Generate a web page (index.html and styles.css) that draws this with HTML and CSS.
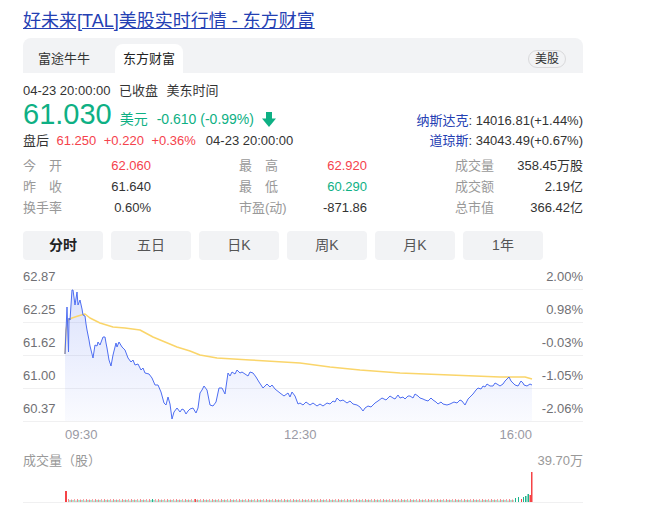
FILE: index.html
```html
<!DOCTYPE html>
<html lang="zh-CN">
<head>
<meta charset="utf-8">
<title>好未来[TAL]美股实时行情 - 东方财富</title>
<link rel="stylesheet" href="styles.css">
</head>
<body>
<div class="card">
  <h3 class="title"><a href="#">好未来[TAL]美股实时行情 - 东方财富</a></h3>

  <div class="source-bar">
    <div class="src-tabs">
      <span class="src-tab">富途牛牛</span>
      <span class="src-tab active">东方财富</span>
    </div>
    <span class="market">美股</span>
  </div>

  <div class="status"><span>04-23 20:00:00</span><span>已收盘</span><span>美东时间</span></div>

  <div class="quote">
    <div class="quote-main">
      <div class="price-row">
        <span class="price">61.030</span>
        <span class="unit">美元</span>
        <span class="change">-0.610 (-0.99%)</span>
        <svg class="arrow" width="14" height="15" viewBox="0 0 14 15"><rect x="4" y="0" width="6" height="8" fill="#0eb084"/><polygon points="0,6.5 14,6.5 7,15" fill="#0eb084"/></svg>
      </div>
      <div class="after-row">
        <span>盘后</span><span class="up">61.250</span><span class="up">+0.220</span><span class="up">+0.36%</span><span>04-23 20:00:00</span>
      </div>
    </div>
    <div class="indexes">
      <div><a href="#">纳斯达克</a>: 14016.81(+1.44%)</div>
      <div><a href="#">道琼斯</a>: 34043.49(+0.67%)</div>
    </div>
  </div>

  <div class="stats">
    <div class="stat"><span class="k">今开</span><span class="v up">62.060</span></div>
    <div class="stat"><span class="k">最高</span><span class="v up">62.920</span></div>
    <div class="stat"><span class="k">成交量</span><span class="v">358.45万股</span></div>
    <div class="stat"><span class="k">昨收</span><span class="v">61.640</span></div>
    <div class="stat"><span class="k">最低</span><span class="v down">60.290</span></div>
    <div class="stat"><span class="k">成交额</span><span class="v">2.19亿</span></div>
    <div class="stat"><span class="k">换手率</span><span class="v">0.60%</span></div>
    <div class="stat"><span class="k">市盈(动)</span><span class="v">-871.86</span></div>
    <div class="stat"><span class="k">总市值</span><span class="v">366.42亿</span></div>
  </div>

  <div class="periods">
    <span class="period active">分时</span>
    <span class="period">五日</span>
    <span class="period">日K</span>
    <span class="period">周K</span>
    <span class="period">月K</span>
    <span class="period">1年</span>
  </div>

  <svg class="chart" width="560" height="251" viewBox="0 0 560 251">
    <defs>
      <linearGradient id="area" gradientUnits="userSpaceOnUse" x1="0" y1="289" x2="0" y2="421">
        <stop offset="0" stop-color="#4e6ef2" stop-opacity="0.2"/>
        <stop offset="1" stop-color="#4e6ef2" stop-opacity="0.03"/>
      </linearGradient>
      <pattern id="vol" patternUnits="userSpaceOnUse" x="68" y="496" width="9" height="6">
        <rect x="0" y="3" width="1" height="3" fill="#f7898d"/>
        <rect x="1.5" y="4" width="1" height="2" fill="#5cc9a8"/>
        <rect x="3" y="3.5" width="1" height="2.5" fill="#f7898d"/>
        <rect x="4.5" y="4" width="1" height="2" fill="#5cc9a8"/>
        <rect x="6" y="3" width="1" height="3" fill="#f9a3a6"/>
        <rect x="7.5" y="4.5" width="1" height="1.5" fill="#5cc9a8"/>
      </pattern>
    </defs>
    <g transform="translate(-23,-260)">
      <g class="grid">
        <line x1="23" y1="289.5" x2="583" y2="289.5"/>
        <line x1="23" y1="322.5" x2="583" y2="322.5"/>
        <line x1="23" y1="355.5" x2="583" y2="355.5"/>
        <line x1="23" y1="388.5" x2="583" y2="388.5"/>
        <line x1="23" y1="421.5" x2="583" y2="421.5"/>
        <line x1="23" y1="502.5" x2="583" y2="502.5"/>
      </g>

      <path fill="url(#area)" d="M65,354 L67,307 68.5,352 69,318 70,320 72,290 73,290 75,305 77,292 78,305 80,300 82,309 83,315 85,316 86,324 87,330 89,340 90,346 91,350 93,358 95,345 97,346 98,342 100,345 103,337 105,337 106,343 107,348 109,360 111,366 113,355 116,343 117,347 119,342 122,347 125,350 128,358 131,362 133,360 135,365 138,364 141,370 143,368 145,373 149,374 152,378 155,385 158,385 161,392 164,403 166,405 168,397 170,404 172,419 174,412 177,408 180,412 182,409 184,410 186,414 188,411 190,409 193,408 196,413 198,408 200,393 202,390 204,386 207,390 210,405 213,406 216,402 219,388 222,388 225,394 228,373 230,376 232,372 235,374 237,370 240,373 242,372 245,374 248,376 250,372 253,373 256,377 259,382 263,388 267,384 270,387 272,385 275,389 280,393 284,396 288,393 290,397 292,392 295,396 298,404 300,403 303,405 306,402 310,405 313,403 317,406 320,404 323,406 327,403 330,404 333,401 335,402 337,398 340,401 343,400 347,403 350,401 353,404 357,405 360,407 363,411 365,408 368,406 371,407 375,403 378,401 382,398 386,400 390,396 393,398 395,399 398,395 400,398 403,397 405,399 408,396 410,396 413,398 415,394 418,396 420,398 423,399 425,400 428,401 431,398 433,400 436,402 438,404 441,402 443,404 447,405 450,404 454,402 457,403 460,400 462,401 465,405 468,399 470,397 473,394 476,390 478,388 481,389 483,386 485,387 487,384 490,386 493,386 495,383 497,384 500,386 503,384 505,381 507,379 509,377 511,381 513,383 515,385 518,386 521,381 523,383 524,385 527,386 530,384 532,385 L532,421 L65,421 Z"/>
      <path class="avg" d="M65,354 L66,330 68,320 72,318 78,316 85,314 90,318 100,323 113,327 125,328 140,330 153,337 165,342 177,347 190,351 200,355 217,358 250,360 300,363 330,367 360,370 400,373 450,375 500,377 525,377 532,379"/>
      <path class="price-line" d="M65,354 L67,307 68.5,352 69,318 70,320 72,290 73,290 75,305 77,292 78,305 80,300 82,309 83,315 85,316 86,324 87,330 89,340 90,346 91,350 93,358 95,345 97,346 98,342 100,345 103,337 105,337 106,343 107,348 109,360 111,366 113,355 116,343 117,347 119,342 122,347 125,350 128,358 131,362 133,360 135,365 138,364 141,370 143,368 145,373 149,374 152,378 155,385 158,385 161,392 164,403 166,405 168,397 170,404 172,419 174,412 177,408 180,412 182,409 184,410 186,414 188,411 190,409 193,408 196,413 198,408 200,393 202,390 204,386 207,390 210,405 213,406 216,402 219,388 222,388 225,394 228,373 230,376 232,372 235,374 237,370 240,373 242,372 245,374 248,376 250,372 253,373 256,377 259,382 263,388 267,384 270,387 272,385 275,389 280,393 284,396 288,393 290,397 292,392 295,396 298,404 300,403 303,405 306,402 310,405 313,403 317,406 320,404 323,406 327,403 330,404 333,401 335,402 337,398 340,401 343,400 347,403 350,401 353,404 357,405 360,407 363,411 365,408 368,406 371,407 375,403 378,401 382,398 386,400 390,396 393,398 395,399 398,395 400,398 403,397 405,399 408,396 410,396 413,398 415,394 418,396 420,398 423,399 425,400 428,401 431,398 433,400 436,402 438,404 441,402 443,404 447,405 450,404 454,402 457,403 460,400 462,401 465,405 468,399 470,397 473,394 476,390 478,388 481,389 483,386 485,387 487,384 490,386 493,386 495,383 497,384 500,386 503,384 505,381 507,379 509,377 511,381 513,383 515,385 518,386 521,381 523,383 524,385 527,386 530,384 532,385"/>

      <text class="ax" x="23" y="280.5">62.87</text>
      <text class="ax" x="23" y="313.5">62.25</text>
      <text class="ax" x="23" y="346.5">61.62</text>
      <text class="ax" x="23" y="379.5">61.00</text>
      <text class="ax" x="23" y="412.5">60.37</text>

      <text class="ax end" x="583" y="280.5">2.00%</text>
      <text class="ax end" x="583" y="313.5">0.98%</text>
      <text class="ax end" x="583" y="346.5">-0.03%</text>
      <text class="ax end" x="583" y="379.5">-1.05%</text>
      <text class="ax end" x="583" y="412.5">-2.06%</text>

      <text class="tm" x="65" y="438.5">09:30</text>
      <text class="tm" x="284" y="438.5">12:30</text>
      <text class="tm end" x="532" y="438.5">16:00</text>

      <text class="vl" x="23" y="464.5">成交量（股）</text>
      <text class="vl end" x="583" y="464.5">39.70万</text>

      <rect x="68" y="496" width="446" height="6" fill="url(#vol)"/>
      <rect x="65" y="491" width="2" height="11" fill="#f54346"/>
      <rect x="152" y="499" width="1" height="3" fill="#1cb48c"/>
      <rect x="195" y="499" width="1" height="3" fill="#f54346"/>
      <rect x="515" y="498" width="1" height="4" fill="#1cb48c"/>
      <rect x="518" y="497" width="1" height="5" fill="#1cb48c"/>
      <rect x="521" y="499" width="1" height="3" fill="#f54346"/>
      <rect x="523" y="497" width="1" height="5" fill="#1cb48c"/>
      <rect x="525" y="496" width="1.5" height="6" fill="#1cb48c"/>
      <rect x="527.5" y="494" width="1.5" height="8" fill="#1cb48c"/>
      <rect x="529.5" y="495" width="1.5" height="7" fill="#f54346"/>
      <rect x="531" y="472" width="1.5" height="30" fill="#f54346"/>
    </g>
  </svg>
</div>
</body>
</html>
```

FILE: styles.css
```css
* {
  box-sizing: border-box;
}

body {
  margin: 0;
  background: #ffffff;
  font-family: "Liberation Sans", Arial, "Noto Sans CJK SC", sans-serif;
  font-size: 13px;
  color: #333333;
}

.card {
  width: 583px;
  padding: 9px 0 0 23px;
}

.title {
  margin: 0;
  font-size: 18px;
  font-weight: normal;
  line-height: 24px;
}

.title a {
  color: #2440b3;
  text-decoration: underline;
}

.source-bar {
  margin-top: 5px;
  height: 35px;
  display: flex;
  justify-content: space-between;
  align-items: flex-end;
  background: #f2f3f5;
  border-radius: 8px 8px 0 0;
  padding: 0 17px 0 7px;
}

.src-tabs {
  display: flex;
  gap: 17px;
}

.src-tab {
  height: 29px;
  line-height: 29px;
  padding: 0 8px;
  font-size: 13px;
  color: #333333;
  border-radius: 8px 8px 0 0;
}

.src-tab.active {
  background: #ffffff;
  color: #222222;
}

.market {
  margin-bottom: 5px;
  height: 18px;
  line-height: 16px;
  padding: 0 6px;
  border: 1px solid #d9d9db;
  border-radius: 9px;
  font-size: 12px;
  color: #333333;
}

.status {
  margin-top: 9px;
  line-height: 18px;
  font-size: 13px;
  color: #333333;
  display: flex;
}

.status span {
  margin-right: 8.5px;
}

.quote {
  display: flex;
  justify-content: space-between;
  align-items: flex-end;
  width: 560px;
}

.price-row {
  display: flex;
  align-items: baseline;
  height: 29px;
  color: #0eb084;
  white-space: nowrap;
}

.price {
  font-size: 29px;
  line-height: 29px;
}

.unit {
  font-size: 14px;
  line-height: 16px;
  margin-left: 8px;
}

.change {
  font-size: 14px;
  line-height: 16px;
  margin-left: 9px;
}

.arrow {
  align-self: flex-end;
  margin: 0 0 2px 8px;
  display: block;
}

.after-row {
  margin-top: 2px;
  line-height: 20px;
  font-size: 13px;
  display: flex;
  white-space: nowrap;
}

.after-row span {
  margin-right: 7.5px;
}

.after-row span:nth-child(4) {
  margin-right: 10px;
}

.up {
  color: #f5424c;
}

.down {
  color: #0eb084;
}

.indexes {
  text-align: right;
  line-height: 20px;
  font-size: 13px;
  color: #333333;
}

.indexes a {
  color: #2440b3;
  text-decoration: none;
}

.stats {
  margin-top: 4px;
  width: 560px;
  display: grid;
  grid-template-columns: 128px 128px 128px;
  column-gap: 88px;
  line-height: 21px;
  font-size: 13px;
}

.stat {
  display: flex;
  justify-content: space-between;
  white-space: nowrap;
}

.stat .k {
  display: inline-block;
  min-width: 39px;
  color: #999999;
  text-align: justify;
  text-align-last: justify;
}

.stat .v {
  color: #333333;
}

.stat .v.up {
  color: #f5424c;
}

.stat .v.down {
  color: #0eb084;
}

.periods {
  margin-top: 13px;
  display: flex;
  gap: 8px;
}

.period {
  width: 80px;
  height: 29px;
  line-height: 29px;
  text-align: center;
  font-size: 14px;
  color: #555555;
  background: #f2f3f5;
  border-radius: 4px;
}

.period.active {
  color: #222222;
  font-weight: bold;
}

.chart {
  display: block;
  font-family: "Liberation Sans", Arial, "Noto Sans CJK SC", sans-serif;
}

.grid line {
  stroke: #f0f0f1;
  stroke-width: 1;
}

.price-line {
  fill: none;
  stroke: #4e6ef2;
  stroke-width: 1;
  stroke-linejoin: round;
}

.avg {
  fill: none;
  stroke: #fad56a;
  stroke-width: 1.5;
  stroke-linejoin: round;
}

.ax {
  font-size: 13px;
  fill: #707074;
}

.tm {
  font-size: 13px;
  fill: #9a9aa4;
}

.vl {
  font-size: 13px;
  fill: #999999;
}

.end {
  text-anchor: end;
}
```
